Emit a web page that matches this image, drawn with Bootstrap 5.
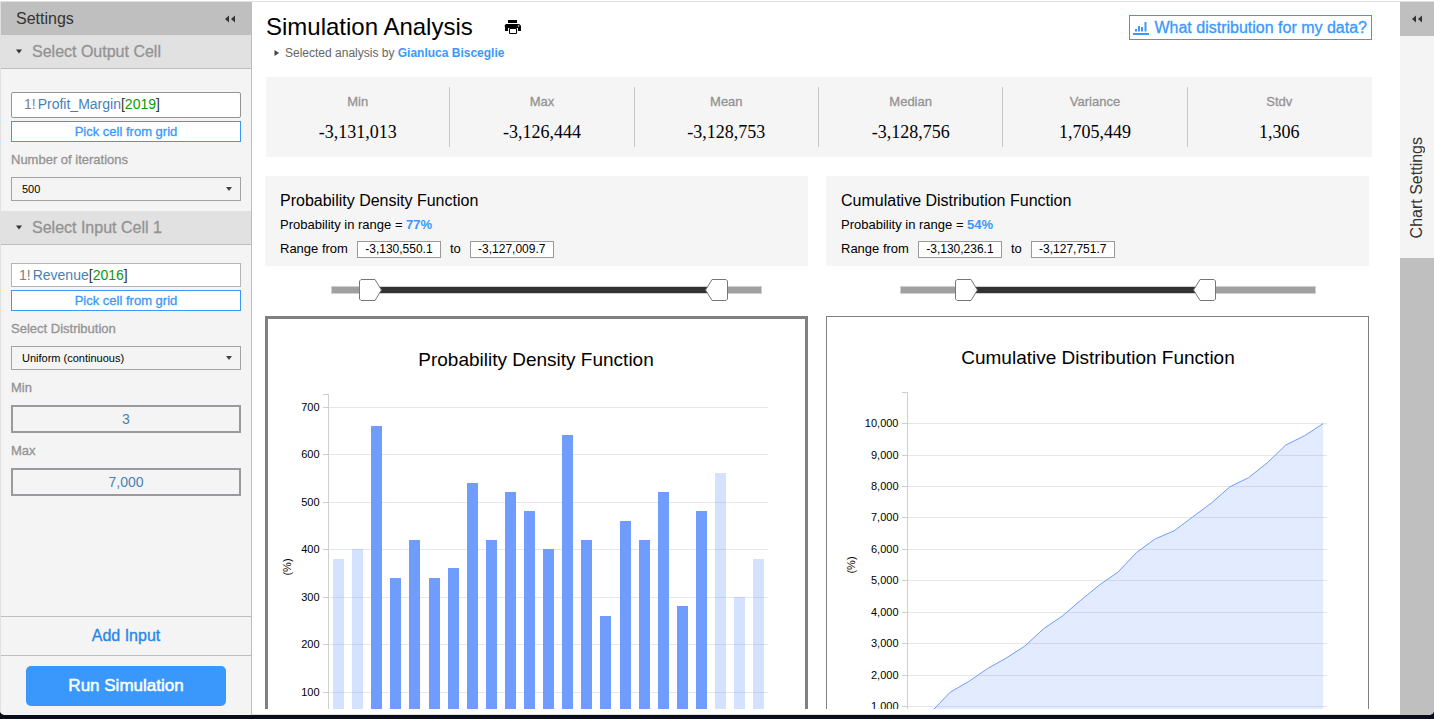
<!DOCTYPE html>
<html lang="en">
<head>
<meta charset="utf-8">
<meta name="viewport" content="width=device-width, initial-scale=1">
<title>Simulation Analysis</title>
<link rel="stylesheet" href="https://cdn.jsdelivr.net/npm/bootstrap@5.3.0/dist/css/bootstrap.min.css">
<style>
  :root { --accent: #3a98fc; --panel: #f5f5f5; --line: #bdbdbd; --bar: #bfbfbf; --muted: #939393; }
  body { background: #0a0e18; color: #000; font-family: "Liberation Sans", Arial, sans-serif; font-size: 13px; line-height: 20px; }
  .window { height: calc(100vh - 4px); background: #fff; padding-top: 1px; border-radius: 0 0 5px 5px; }
  .window-body { border-top: 1px solid #e0e0e0; }
  button { font-family: inherit; }
  .accent { color: var(--accent); }
  .section-head, .pick, .fields label, .add-input, .which, .summary dt { -webkit-text-stroke: 0.3px currentColor; }

  /* left settings column */
  .settings { width: 252px; background: #f4f4f4; border-left: 1px solid #e0e0e0; border-right: 1px solid var(--line); }
  .settings-head { height: 33px; background: var(--bar); padding: 0 15px; color: #333; font-size: 16px; }
  .section-head { height: 34px; background: #e1e1e1; border: 0; border-bottom: 1px solid var(--line); padding: 0 15px; gap: 9px; color: var(--muted); font-size: 16px; text-align: left; }
  .settings h2, .panel-title { font-size: 16px; line-height: 20px; font-weight: 400; }
  .fields { padding: 18px 10px 10px; }
  .fields-first { padding-top: 23px; }
  .formula { height: 24px; background: #fff; border: 1px solid #b5b5b5; padding: 0 7px; font-size: 14px; line-height: 22px; white-space: nowrap; color: #333; }
  .formula-active { height: 26px; border-color: #949494; border-radius: 2px; padding: 0 12px; line-height: 23px; }
  .sheet-no { color: #808080; padding-right: 2px; }
  .item-name { color: #4682b4; }
  .item-key { color: #0a9a0a; }
  .pick { height: 21px; margin-top: 3px; background: #fff; border: 1px solid var(--accent); color: var(--accent); font-size: 13px; line-height: 18px; padding: 0; }
  .fields label { color: var(--muted); margin: 8px 0 7px; line-height: 20px; }
  .drop { appearance: none; height: 24px; border: 1px solid #a3a3a3; padding: 0 10px; font-size: 11px; color: #000; border-radius: 0;
    background: #f4f4f4 url("data:image/svg+xml,%3Csvg xmlns='http://www.w3.org/2000/svg' width='6' height='4'%3E%3Cpath d='M0 0h6L3 4z' fill='%23444'/%3E%3C/svg%3E") no-repeat right 8px center; }
  .num { height: 28px; border: 2px solid #9a9a9e; background: #f4f4f4; color: #4682b4; font-size: 14px; text-align: center; padding: 0; }
  .add-input { height: 39px; border: 0; border-top: 1px solid var(--line); background: none; color: #2586ea; font-size: 16px; }
  .run-area { border-top: 1px solid var(--line); padding: 10px 25px 9px; }
  .run { height: 40px; background: var(--accent); color: #fff; border: 0; border-radius: 5px; font-size: 17px; -webkit-text-stroke: 0.5px #fff; }
  .plain { border: 0; background: none; padding: 0; display: flex; }

  /* results */
  .results { border-bottom: 1px solid #dcdcdc; padding-bottom: 5px; min-width: 0; }
  .results-scroll { overflow-y: auto; scrollbar-width: none; }
  .results-scroll::-webkit-scrollbar { display: none; }
  .results-top { padding: 13px 28px 0 14px; }
  .title-row { height: 25px; gap: 31px; }
  .title-row h1 { font-size: 24px; line-height: 23px; padding-bottom: 2px; }
  .which { height: 25px; border: 1px solid var(--accent); padding: 0 4px 0 3px; gap: 5px; font-size: 16px; line-height: 23px; color: var(--accent); text-decoration: none; }
  .byline { font-size: 12px; margin-top: 3px; padding-left: 8px; gap: 6px; color: #666; }
  .byline a { color: var(--accent); text-decoration: none; }
  .summary { background: var(--panel); margin-top: 14px; padding: 10px 0; }
  .summary .stat { border-right: 1px solid #c8c8c8; height: 60px; padding-top: 5px; }
  .summary .stat:last-child { border-right-color: transparent; }
  .summary dt { color: var(--muted); font-weight: 400; line-height: 20px; }
  .summary dd { font: 18px/20px "Liberation Serif", "Times New Roman", serif; margin: 10px 0 0; }

  .charts { display: grid; grid-template-columns: 1fr 1fr; gap: 18px; padding: 19px 31px 0 13px; }
  .panel-box { background: var(--panel); height: 90px; padding: 15px 15px 0; }
  .panel-line { margin-top: 4px; gap: 9px; }
  .range-value { width: 84px; height: 17px; border: 1px solid #999; background: #fff; font-size: 12px; line-height: 15px; padding: 0; text-align: center; color: #000; }
  .slider-row { height: 50px; padding: 12px 46px 0 66px; }
  .slider-row-wide { padding: 12px 53px 0 74px; }
  .slider { position: relative; height: 24px; display: flex; align-items: center; }
  .slider-track { flex: 1; height: 8px; background: #a0a0a0; border: 1px solid #cfcfcf; padding: 0; }
  .slider-fill { height: 6px; background: #333; }
  .slider input { position: absolute; left: 0; top: 0; width: 100%; height: 24px; margin: 0; appearance: none; background: none; pointer-events: none; }
  .slider input::-webkit-slider-thumb { appearance: none; pointer-events: auto; width: 23px; height: 22px; border: 0; background: var(--thumb) no-repeat center; }
  .slider .thumb-from { --thumb: url("data:image/svg+xml,%3Csvg xmlns='http://www.w3.org/2000/svg' width='23' height='22'%3E%3Cpath d='M2 .5h14l6.400 10.500L16 21.500H2L.5 20V2z' fill='%23fff' stroke='%23777'/%3E%3C/svg%3E"); }
  .slider .thumb-to { --thumb: url("data:image/svg+xml,%3Csvg xmlns='http://www.w3.org/2000/svg' width='23' height='22'%3E%3Cpath d='M21 .5H7L.6 11 7 21.500h14l1.500-1.500V2z' fill='%23fff' stroke='%23777'/%3E%3C/svg%3E"); }
  .chart-box { border: 1px solid #808080; }
  .chart-selected { border: 3px solid #808080; }
  .chart-box svg { display: block; width: 100%; height: auto; font-family: "Liberation Sans", Arial, sans-serif; }
  .chart-title { font-size: 19px; text-anchor: middle; }
  .tick-text { font-size: 11px; text-anchor: end; }
  .axis-text { font-size: 11px; text-anchor: middle; }
  .axis-line { stroke: #cfcfd2; fill: none; shape-rendering: crispEdges; }
  .grid-line { stroke: #e6e6ea; shape-rendering: crispEdges; }

  /* right collapsed column */
  .rail { width: 34px; background: var(--bar); }
  .rail-toggle { height: 34px; }
  .rail-tab { height: 222px; background: #f4f4f4; color: #333; font-size: 16px; border: 0; padding: 0 0 20px; }
  .rail-tab span { writing-mode: vertical-rl; transform: rotate(180deg); }
</style>
</head>
<body>
<div class="window overflow-hidden">
  <div class="window-body d-flex h-100">

    <aside class="settings d-flex flex-column flex-shrink-0">
      <div class="settings-head d-flex align-items-center justify-content-between">
        <h2 class="m-0">Settings</h2>
        <button type="button" class="plain" aria-label="Collapse settings">
          <svg width="12" height="8" fill="#333"><path d="M5 0.500v7L1 4zM11 0.500v7L7 4z"/></svg>
        </button>
      </div>

      <button type="button" class="section-head d-flex align-items-center w-100">
        <svg width="7" height="5" fill="#333"><path d="M0 0.500h6L3 4.500z"/></svg>Select Output Cell
      </button>
      <div class="fields fields-first">
        <div class="formula formula-active" role="textbox" contenteditable="true" spellcheck="false" aria-label="Output cell"><span class="sheet-no">1!</span><span class="item-name">Profit_Margin</span>[<span class="item-key">2019</span>]</div>
        <button type="button" class="pick w-100 d-block">Pick cell from grid</button>
        <label class="d-block" for="iterations">Number of iterations</label>
        <select class="drop w-100 d-block" id="iterations"><option>500</option><option>1000</option></select>
      </div>

      <button type="button" class="section-head d-flex align-items-center w-100">
        <svg width="7" height="5" fill="#333"><path d="M0 0.500h6L3 4.500z"/></svg>Select Input Cell 1
      </button>
      <div class="fields flex-grow-1">
        <div class="formula" role="textbox" contenteditable="true" spellcheck="false" aria-label="Input cell 1"><span class="sheet-no">1!</span><span class="item-name">Revenue</span>[<span class="item-key">2016</span>]</div>
        <button type="button" class="pick w-100 d-block">Pick cell from grid</button>
        <label class="d-block" for="distribution">Select Distribution</label>
        <select class="drop w-100 d-block" id="distribution"><option>Uniform (continuous)</option><option>Normal</option></select>
        <label class="d-block" for="dist-min">Min</label>
        <input class="num w-100 d-block" id="dist-min" type="text" value="3">
        <label class="d-block" for="dist-max">Max</label>
        <input class="num w-100 d-block" id="dist-max" type="text" value="7,000">
      </div>

      <button type="button" class="add-input w-100">Add Input</button>
      <div class="run-area"><button type="button" class="run w-100 d-block">Run Simulation</button></div>
    </aside>

    <main class="results flex-grow-1 d-flex flex-column">
      <div class="results-scroll flex-grow-1">
        <div class="results-top">
          <div class="title-row d-flex align-items-center">
            <h1 class="m-0 fw-normal">Simulation Analysis</h1>
            <button type="button" class="plain" aria-label="Print">
              <svg width="17" height="15" viewBox="0 0 17 15"><path d="M4 0h9v3H4zM3 4h11a3 3 0 0 1 3 3v4h-3V8H4v3H1V7a2 2 0 0 1 2-3z"/><path d="M5.500 8.500h7v5h-7z" fill="#fff" stroke="#000"/><circle cx="14.500" cy="6" r=".8" fill="#fff"/></svg>
            </button>
            <a href="#" class="which ms-auto d-flex align-items-center">
              <svg width="16" height="14" fill="#3a98fc"><path d="M0 12h16v2H0zM2 8h2v2.500H2zM5 5h2v5.500H5zM8 6h2v4.500H8zM11.500 1h2v9.500h-2z"/></svg>
              <span>What distribution for my data?</span>
            </a>
          </div>
          <div class="byline d-flex align-items-center">
            <svg width="5" height="6" fill="#444"><path d="M.5 0v6L5 3z"/></svg>
            <span>Selected analysis by <a href="#" class="fw-bold">Gianluca Bisceglie</a></span>
          </div>
          <dl class="summary d-flex text-center mb-0">
            <div class="stat col"><dt>Min</dt><dd>-3,131,013</dd></div>
            <div class="stat col"><dt>Max</dt><dd>-3,126,444</dd></div>
            <div class="stat col"><dt>Mean</dt><dd>-3,128,753</dd></div>
            <div class="stat col"><dt>Median</dt><dd>-3,128,756</dd></div>
            <div class="stat col"><dt>Variance</dt><dd>1,705,449</dd></div>
            <div class="stat col"><dt>Stdv</dt><dd>1,306</dd></div>
          </dl>
        </div>

        <div class="charts">
          <section>
            <div class="panel-box">
              <h2 class="panel-title m-0">Probability Density Function</h2>
              <div class="panel-line">Probability in range = <strong class="accent">77%</strong></div>
              <div class="panel-line d-flex align-items-center">
                <label for="pdf-from">Range from</label><input class="range-value" id="pdf-from" type="text" value="-3,130,550.1">
                <label for="pdf-to">to</label><input class="range-value" id="pdf-to" type="text" value="-3,127,009.7">
              </div>
            </div>
            <div class="slider-row">
              <div class="slider">
                <div class="slider-track"><div class="slider-fill" style="margin-left:10%;width:78%"></div></div>
                <input type="range" class="thumb-from" min="0" max="1000" value="69" aria-label="Density range start">
                <input type="range" class="thumb-to" min="0" max="1000" value="916" aria-label="Density range end">
              </div>
            </div>
            <div class="chart-box chart-selected"><svg id="pdf" viewBox="0 0 537 480" role="img" aria-label="Probability density bar chart"></svg></div>
          </section>

          <section>
            <div class="panel-box">
              <h2 class="panel-title m-0">Cumulative Distribution Function</h2>
              <div class="panel-line">Probability in range = <strong class="accent">54%</strong></div>
              <div class="panel-line d-flex align-items-center">
                <label for="cdf-from">Range from</label><input class="range-value" id="cdf-from" type="text" value="-3,130,236.1">
                <label for="cdf-to">to</label><input class="range-value" id="cdf-to" type="text" value="-3,127,751.7">
              </div>
            </div>
            <div class="slider-row slider-row-wide">
              <div class="slider">
                <div class="slider-track"><div class="slider-fill" style="margin-left:17%;width:56%"></div></div>
                <input type="range" class="thumb-from" min="0" max="1000" value="140" aria-label="Cumulative range start">
                <input type="range" class="thumb-to" min="0" max="1000" value="746" aria-label="Cumulative range end">
              </div>
            </div>
            <div class="chart-box"><svg id="cdf" viewBox="0 0 541 480" role="img" aria-label="Cumulative distribution area chart"></svg></div>
          </section>
        </div>
      </div>
    </main>

    <aside class="rail d-flex flex-column flex-shrink-0">
      <button type="button" class="plain rail-toggle align-items-center justify-content-center" aria-label="Expand chart settings">
        <svg width="12" height="8" fill="#333"><path d="M5 0.500v7L1 4zM11 0.500v7L7 4z"/></svg>
      </button>
      <button type="button" class="rail-tab d-flex align-items-end justify-content-center"><span>Chart Settings</span></button>
    </aside>
  </div>
</div>

<script src="https://cdn.jsdelivr.net/npm/bootstrap@5.3.0/dist/js/bootstrap.bundle.min.js"></script>
<script>
  // Axis, grid lines, tick labels and title shared by both charts.
  function frame(o) {
    let out = `<text class="chart-title" x="${o.titleX}" y="${o.titleY}">${o.title}</text>`;
    for (let v = o.step; v <= o.max; v += o.step) {
      const y = Math.floor(o.y(v)) + 0.5;
      out += `<path class="grid-line" d="M${o.axis} ${y}H${o.right}"/><path class="axis-line" d="M${o.axis - 6} ${y}H${o.axis}"/>` +
             `<text class="tick-text" x="${o.axis - 9}" y="${y + 3.5}">${v.toLocaleString('en-US')}</text>`;
    }
    out += `<path class="axis-line" d="M${o.axis - 6} ${o.top}H${o.axis}V${o.y(0)}"/>`;
    return out + `<text class="axis-text" transform="translate(${o.unitX} 248) rotate(-90)">(%)</text>`;
  }

  const counts = [380, 400, 660, 340, 420, 340, 360, 540, 420, 520, 480, 400, 640, 420, 260, 460, 420, 520, 280, 480, 560, 300, 380];
  const yPdf = v => 420.5 - v * 0.475;
  let pdf = frame({ title: 'Probability Density Function', titleX: 268, titleY: 47, axis: 60.5, right: 499.5, top: 75.5, max: 700, step: 100, y: yPdf, unitX: 23 });
  counts.forEach((v, i) => {
    const shade = i > 1 && i < 20 ? 1 : 0.3;
    const top = Math.floor(yPdf(v));
    pdf += `<rect x="${Math.round(65 + i * 19.1)}" y="${top}" width="11" height="${420 - top}" fill="#709cfe" fill-opacity="${shade}"/>`;
  });
  document.getElementById('pdf').innerHTML = pdf;

  const totals = [400, 850, 1470, 1810, 2220, 2550, 2930, 3480, 3880, 4390, 4870, 5280, 5910, 6340, 6590, 7030, 7470, 7990, 8280, 8750, 9320, 9610, 10000];
  const yCdf = v => 421.35 - v * 0.03148;
  const line = totals.map((v, i) => `${(86 + i * 18.64).toFixed(1)} ${yCdf(v).toFixed(1)}`).join('L');
  document.getElementById('cdf').innerHTML =
    frame({ title: 'Cumulative Distribution Function', titleX: 271, titleY: 47, axis: 80.5, right: 499.5, top: 75.5, max: 10000, step: 1000, y: yCdf, unitX: 28 }) +
    `<path d="M86 421L${line}V421z" fill="#709cfe" fill-opacity=".2"/><path d="M${line}" fill="none" stroke="#709cfe"/>`;
</script>
</body>
</html>
